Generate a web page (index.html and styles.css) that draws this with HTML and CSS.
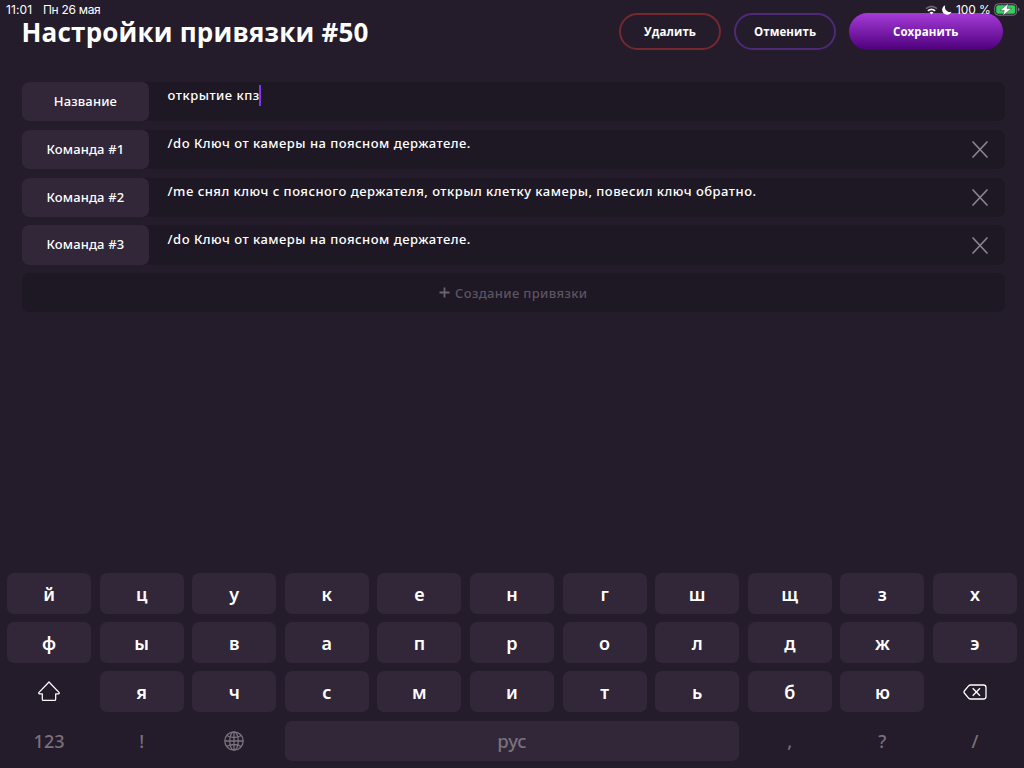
FILE: index.html
```html
<!DOCTYPE html>
<html lang="ru">
<head>
<meta charset="utf-8">
<title>Настройки привязки</title>
<link rel="stylesheet" href="styles.css">
</head>
<body>
<div class="status">
  <span class="clock">11:01</span><span class="date">Пн 26 мая</span>
  <svg class="wifi" viewBox="0 0 13 10" width="13" height="10"><path d="M1 3.7Q6.500-1 12 3.700" fill="none" stroke="#6c6570" stroke-width="1.600"/><path d="M2.900 5.900Q6.500 2.800 10.100 5.900" fill="none" stroke="#fff" stroke-width="1.800"/><path d="M4.500 7.400Q6.500 5.900 8.500 7.400L6.500 9.500Z" fill="#fff"/></svg>
  <svg class="moon" viewBox="0 0 10 10" width="10" height="10"><path d="M3.300.3A4.900 4.900 0 1 0 9.600 6.700A4.900 4.900 0 0 1 3.300.3Z" fill="#fff"/></svg>
  <span class="percent">100 %</span>
  <svg class="battery" viewBox="0 0 26 13" width="26" height="13"><rect x=".7" y=".8" width="22" height="11.400" rx="3.500" fill="none" stroke="#7d7782"/><rect x="2.200" y="2.300" width="19" height="8.400" rx="2" fill="#31cf5b"/><path d="M24 4.500Q25.500 5 25.500 6.500T24 8.500Z" fill="#7d7782"/><path d="M14.300.5L6 7.500H10.300L8.900 12.600L17.500 5.400H13Z" fill="#fff" stroke="#241c2a" stroke-width=".4"/></svg>
</div>
<main class="page">
  <header class="header">
    <h1 class="title">Настройки привязки #50</h1>
    <button class="btn delete">Удалить</button>
    <button class="btn cancel">Отменить</button>
    <button class="btn save">Сохранить</button>
  </header>
  <section class="rows">
    <div class="row"><div class="label">Название</div><div class="value">открытие кпз<i class="caret"></i></div></div>
    <div class="row"><div class="label">Команда #1</div><div class="value">/do Ключ от камеры на поясном держателе.</div><svg class="close" viewBox="0 0 16 17"><path d="M1 1L15 16M15 1L1 16"/></svg></div>
    <div class="row"><div class="label">Команда #2</div><div class="value">/me снял ключ с поясного держателя, открыл клетку камеры, повесил ключ обратно.</div><svg class="close" viewBox="0 0 16 17"><path d="M1 1L15 16M15 1L1 16"/></svg></div>
    <div class="row"><div class="label">Команда #3</div><div class="value">/do Ключ от камеры на поясном держателе.</div><svg class="close" viewBox="0 0 16 17"><path d="M1 1L15 16M15 1L1 16"/></svg></div>
    <div class="row create"><svg class="plus" viewBox="0 0 11 11"><path d="M5.500 .5V10.500M.5 5.500H10.500"/></svg><span>Создание привязки</span></div>
  </section>
</main>
<section class="keyboard">
  <div class="key">й</div><div class="key">ц</div><div class="key">у</div><div class="key">к</div><div class="key">е</div><div class="key">н</div><div class="key">г</div><div class="key">ш</div><div class="key">щ</div><div class="key">з</div><div class="key">х</div>
  <div class="key">ф</div><div class="key">ы</div><div class="key">в</div><div class="key">а</div><div class="key">п</div><div class="key">р</div><div class="key">о</div><div class="key">л</div><div class="key">д</div><div class="key">ж</div><div class="key">э</div>
  <div class="key bare"><svg class="icon shift" viewBox="0 0 24 22"><path d="M12 1L22.700 12.200Q23 13.400 22 13.500H19V19Q19 20.300 17.700 20.300H6.300Q5 20.300 5 19V13.500H2Q1 13.400 1.300 12.200Z"/></svg></div><div class="key">я</div><div class="key">ч</div><div class="key">с</div><div class="key">м</div><div class="key">и</div><div class="key">т</div><div class="key">ь</div><div class="key">б</div><div class="key">ю</div><div class="key bare"><svg class="icon erase" viewBox="0 0 24 16"><path d="M7.300 1H20.500Q23 1 23 3.500V12.500Q23 15 20.500 15H7.300Q6.500 15 5.800 14.300L1.300 9Q.7 8 1.300 7L5.800 1.700Q6.500 1 7.300 1ZM9.700 4.300L17 11.700M17 4.300L9.700 11.700"/></svg></div>
  <div class="key bare muted">123</div><div class="key bare muted">!</div><div class="key bare muted"><svg class="icon globe" viewBox="0 0 20 20"><circle cx="10" cy="10" r="9.200"/><ellipse cx="10" cy="10" rx="4.300" ry="9.200"/><path d="M10 .8V19.200M.8 10H19.200M2.600 4.500Q10 8.500 17.400 4.500M2.600 15.500Q10 11.500 17.400 15.500"/></svg></div><div class="key space muted">рус</div><div class="key bare muted">,</div><div class="key bare muted">?</div><div class="key bare muted">/</div>
</section>
</body>
</html>
```
FILE: styles.css
```css
* { box-sizing: border-box; }
body {
  margin: 0;
  width: 1024px;
  height: 768px;
  overflow: hidden;
  display: flex;
  flex-direction: column;
  justify-content: space-between;
  background: #241c2a;
  color: #fff;
  font-family: "Noto Sans", "Open Sans", sans-serif;
}
.status {
  position: absolute;
  z-index: 2;
  top: 2px;
  left: 6px;
  right: 4px;
  height: 15px;
  display: flex;
  align-items: center;
  font: 12px/15px Inter, sans-serif;
}
.clock { width: 37px; letter-spacing: .1px; }
.date { letter-spacing: -.3px; }
.wifi { margin: 0 4px 0 auto; }
.moon { margin-right: 4px; }
.percent { width: 35px; margin-right: 3px; white-space: nowrap; letter-spacing: -.1px; }
.page { padding: 13px 19px 0 21.500px; }
.header {
  display: flex;
  align-items: center;
  height: 37px;
  gap: 13px;
  padding-right: 2.500px;
}
.title {
  margin: 1px auto 0 0;
  font-family: "Open Sans", sans-serif;
  font-size: 26px;
  line-height: 26px;
  font-weight: 700;
  letter-spacing: .2px;
  white-space: nowrap;
}
.btn {
  width: 102px;
  height: 37px;
  padding: 0;
  border: 2px solid;
  border-radius: 19px;
  background: none;
  color: #fff;
  font: 700 11.500px/20px "Open Sans", sans-serif;
  letter-spacing: .1px;
}
.delete { border-color: #74292e; }
.cancel { border-color: #4c2a78; }
.save { width: 153.500px; border: 0; background: linear-gradient(#a63bd8, #4d007c); }
.rows { display: flex; flex-direction: column; gap: 8.500px; margin-top: 32px; }
.row {
  display: flex;
  align-items: center;
  height: 39.300px;
  border-radius: 7px;
  background: #1e1724;
}
.label {
  width: 127.800px;
  height: 100%;
  border-radius: 7px;
  background: #322639;
  font-size: 13px;
  font-weight: 500;
  line-height: 39.300px;
  text-align: center;
  letter-spacing: .15px;
}
.value {
  display: flex;
  align-self: flex-start;
  padding: 3.200px 0 0 18.300px;
  font-size: 13px;
  font-weight: 500;
  line-height: 20px;
  letter-spacing: .49px;
  white-space: nowrap;
}
.caret { width: 2px; height: 21px; margin-left: -.5px; background: #8035ec; }
.close {
  width: 16px;
  height: 17px;
  margin: 0 17.500px 0 auto;
  fill: none;
  stroke: #8b8291;
  stroke-width: 1.700;
  stroke-linecap: round;
}
.create {
  justify-content: center;
  gap: 5px;
  color: #5c5561;
  font-size: 13px;
  font-weight: 500;
  letter-spacing: .35px;
}
.plus { width: 11px; height: 11px; fill: none; stroke: #6a636f; stroke-width: 1.800; }
.keyboard {
  display: grid;
  grid-template-columns: repeat(11, 1fr);
  grid-auto-rows: 40.700px;
  gap: 8.350px 8.500px;
  padding: 0 7px 6.800px;
}
.key {
  display: flex;
  align-items: center;
  justify-content: center;
  border-radius: 7px;
  background: #322639;
  font-size: 18px;
  font-weight: 600;
  line-height: 24px;
}
.bare { background: none; }
.muted { color: #79717d; font-weight: 500; }
.space { grid-column: span 5; font-size: 18.500px; }
.icon { fill: none; stroke: #fff; stroke-width: 1.300; stroke-linejoin: round; }
.shift { width: 24px; height: 21px; margin-bottom: 1px; }
.erase { width: 24px; height: 16px; }
.globe { width: 20px; height: 20px; stroke: #79717d; }
```
